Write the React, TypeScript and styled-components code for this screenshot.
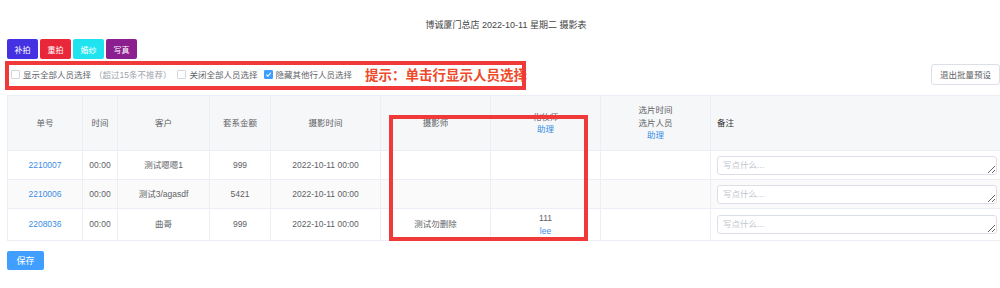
import styled, { createGlobalStyle } from 'styled-components';

const GlobalStyle = createGlobalStyle`
  body {
    margin: 0;
    background: #fff;
    overflow: hidden;
    font-family: "Liberation Sans", "Noto Sans CJK SC", sans-serif;
  }
`;

type Row = {
  no: string;
  time: string;
  customer: string;
  amount: string;
  shootTime: string;
  photographer?: string;
  makeup?: string;
  makeupAssistant?: string;
};

const rows: Row[] = [
  { no: '2210007', time: '00:00', customer: '测试嗯嗯1', amount: '999', shootTime: '2022-10-11 00:00' },
  { no: '2210006', time: '00:00', customer: '测试3/agasdf', amount: '5421', shootTime: '2022-10-11 00:00' },
  {
    no: '2208036',
    time: '00:00',
    customer: '曲哥',
    amount: '999',
    shootTime: '2022-10-11 00:00',
    photographer: '测试勿删除',
    makeup: '111',
    makeupAssistant: 'lee',
  },
];

const kinds = [
  { label: '补拍', color: '#4431e2' },
  { label: '重拍', color: '#e8273b' },
  { label: '婚纱', color: '#1fe4f0' },
  { label: '写真', color: '#8c1f8f' },
];

// widths of the table columns, summing to the table width
const colWidths = [75, 35, 92, 61, 110, 110, 110, 110, 295];

const Check = ({ checked }: { checked?: boolean }) => (
  <Box checked={checked}>
    {checked && (
      <svg width="7" height="7" viewBox="0 0 8 8">
        <path d="M1.5 4.2 L3.3 6 L6.6 2" stroke="#fff" strokeWidth="1.3" fill="none" />
      </svg>
    )}
  </Box>
);

const App = () => {
  return (
    <Page>
      <GlobalStyle />
      <Title>博诚厦门总店 2022-10-11 星期二 摄影表</Title>
      <KindBar>
        {kinds.map((k) => (
          <KindButton key={k.label} color={k.color}>
            {k.label}
          </KindButton>
        ))}
      </KindBar>
      <OptionsRow>
        <Options>
          <Option>
            <Check />
            显示全部人员选择<Muted>（超过15条不推荐）</Muted>
          </Option>
          <Option>
            <Check />
            关闭全部人员选择
          </Option>
          <Option>
            <Check checked />
            隐藏其他行人员选择
          </Option>
          <Hint>提示：单击行显示人员选择</Hint>
        </Options>
        <ExitButton>退出批量预设</ExitButton>
      </OptionsRow>

      <Table>
        <colgroup>
          {colWidths.map((w, i) => (
            <col key={i} style={{ width: w }} />
          ))}
        </colgroup>
        <thead>
          <tr>
            <Th>单号</Th>
            <Th>时间</Th>
            <Th>客户</Th>
            <Th>套系金额</Th>
            <Th>摄影时间</Th>
            <Th>摄影师</Th>
            <Th>
              化妆师
              <br />
              <Link>助理</Link>
            </Th>
            <Th>
              选片时间
              <br />
              选片人员
              <br />
              <Link>助理</Link>
            </Th>
            <Th align="left" dark>
              备注
            </Th>
          </tr>
        </thead>
        <tbody>
          {rows.map((r, i) => (
            <Tr key={r.no} striped={i % 2 === 1} tall={!!r.makeup}>
              <Td>
                <Link>{r.no}</Link>
              </Td>
              <Td>{r.time}</Td>
              <Td>{r.customer}</Td>
              <Td>{r.amount}</Td>
              <Td>{r.shootTime}</Td>
              <Td>{r.photographer}</Td>
              <Td>
                {r.makeup && (
                  <>
                    <Dark>{r.makeup}</Dark>
                    <br />
                    <Link>{r.makeupAssistant}</Link>
                  </>
                )}
              </Td>
              <Td />
              <Td align="left">
                <Note placeholder="写点什么..." />
              </Td>
            </Tr>
          ))}
        </tbody>
      </Table>
      <SaveButton>保存</SaveButton>

      <Highlight style={{ left: 5, top: 61, width: 521, height: 29 }} />
      <Highlight style={{ left: 389, top: 115, width: 199, height: 126 }} />
    </Page>
  );
};

const Page = styled.div`
  position: relative;
  width: 998px;
  padding: 0 5px 20px 7px;
  font-size: 8.5px;
  color: #606266;
`;

const Title = styled.div`
  padding-top: 19px;
  height: 12px;
  line-height: 12px;
  text-align: center;
  font-size: 9px;
  color: #444;
`;

const KindBar = styled.div`
  display: flex;
  gap: 2px;
  margin-top: 8px;
`;

const KindButton = styled.button<{ color: string }>`
  width: 31px;
  height: 20px;
  padding: 0;
  border: none;
  border-radius: 2px;
  background: ${(p) => p.color};
  color: #fff;
  font-family: inherit;
  font-size: 8px;
`;

const OptionsRow = styled.div`
  display: flex;
  justify-content: space-between;
  align-items: center;
  height: 20px;
  margin-top: 5px;
`;

const Options = styled.div`
  display: flex;
  align-items: center;
  margin-left: 4px;
  white-space: nowrap;
`;

const Option = styled.label`
  display: flex;
  align-items: center;
  gap: 3px;
  margin-right: 6px;
  color: #606266;
`;

const Muted = styled.span`
  color: #a0a4ab;
`;

const Box = styled.span<{ checked?: boolean }>`
  display: inline-flex;
  align-items: center;
  justify-content: center;
  width: 7px;
  height: 7px;
  border: 1px solid ${(p) => (p.checked ? '#409eff' : '#d4d7de')};
  border-radius: 1px;
  background: ${(p) => (p.checked ? '#409eff' : '#fff')};
`;

const Hint = styled.span`
  margin-left: 7px;
  font-size: 13.5px;
  font-weight: bold;
  color: #ee4a2a;
`;

const ExitButton = styled.button`
  height: 21px;
  width: 69px;
  margin-right: 5px;
  padding: 0;
  border: 1px solid #dcdfe6;
  border-radius: 3px;
  background: #fff;
  color: #606266;
  font-family: inherit;
  font-size: 8.5px;
`;

const Table = styled.table`
  width: 998px;
  margin-top: 11px;
  border-collapse: collapse;
  table-layout: fixed;
`;

const Th = styled.th<{ align?: string; dark?: boolean }>`
  height: 54px;
  padding: 0 6px;
  background: #f6f7f8;
  border: 1px solid #ebeef5;
  font-weight: normal;
  line-height: 12.5px;
  text-align: ${(p) => p.align || 'center'};
  color: ${(p) => (p.dark ? '#333' : '#606266')};
`;

const Tr = styled.tr<{ striped?: boolean; tall?: boolean }>`
  height: ${(p) => (p.tall ? 32 : 29)}px;
  background: ${(p) => (p.striped ? '#fafafa' : '#fff')};
`;

const Td = styled.td<{ align?: string }>`
  padding: 0 6px;
  border: 1px solid #ebeef5;
  text-align: ${(p) => p.align || 'center'};
  line-height: 13px;
  vertical-align: middle;
`;

const Link = styled.span`
  color: #3a8ee6;
`;

const Dark = styled.span`
  color: #606266;
`;

const Note = styled.textarea`
  display: block;
  box-sizing: border-box;
  width: 280px;
  height: 19px;
  padding: 3px 5px;
  border: 1px solid #dcdfe6;
  border-radius: 3px;
  font-family: inherit;
  font-size: 8.5px;
  line-height: 11px;
  color: #606266;
  &::placeholder {
    color: #c0c4cc;
  }
`;

const SaveButton = styled.button`
  display: block;
  width: 37px;
  height: 19px;
  margin-top: 10px;
  padding: 0;
  border: none;
  border-radius: 2px;
  background: #409eff;
  color: #fff;
  font-family: inherit;
  font-size: 9px;
`;

const Highlight = styled.div`
  position: absolute;
  box-sizing: border-box;
  border: 4px solid #f03a3a;
  pointer-events: none;
`;

export default App;
